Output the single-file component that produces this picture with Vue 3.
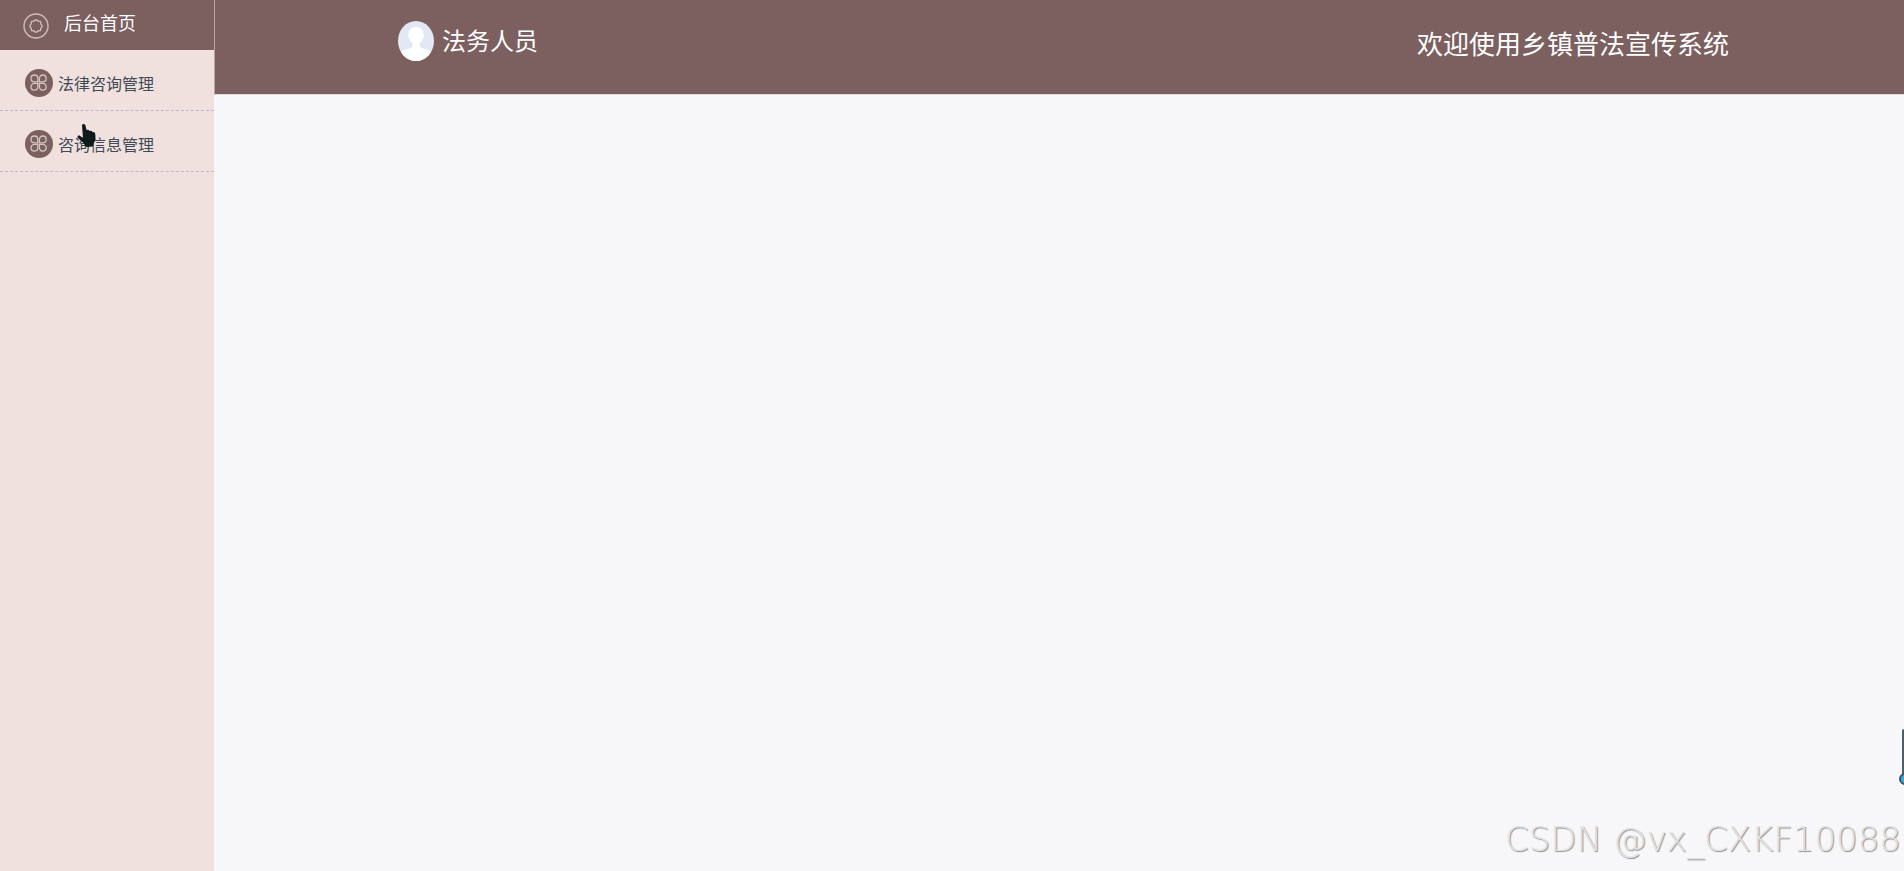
<template>
  <div class="admin-layout">
    <aside class="sidebar">
      <a href="#" class="sidebar-home">
        <svg class="home-icon" viewBox="0 0 26 26" aria-hidden="true">
          <circle cx="13" cy="13" r="12" />
          <path
            d="M11 8.2 Q13 5.4 15 8.2 Q18.4 7.6 17.8 11 Q20.6 13 17.8 15 Q18.4 18.4 15 17.8 Q13 20.6 11 17.8 Q7.6 18.4 8.2 15 Q5.4 13 8.2 11 Q7.6 7.6 11 8.2 Z"
          />
        </svg>
        <span>后台首页</span>
      </a>
      <nav class="menu">
        <a v-for="item in menus" :key="item" href="#" class="menu-item">
          <svg class="menu-icon" viewBox="0 0 28 28" aria-hidden="true">
            <circle class="disc" cx="14" cy="14" r="14" />
            <path d="M12.8 12.8 H9.4 A3.4 3.4 0 1 1 12.8 9.4 Z" />
            <path d="M14.4 12.8 V9.4 A3.4 3.4 0 1 1 17.8 12.8 Z" />
            <path d="M12.8 14.4 V17.8 A3.4 3.4 0 1 1 9.4 14.4 Z" />
            <path d="M14.4 14.4 H17.8 A3.4 3.4 0 1 1 14.4 17.8 Z" />
          </svg>
          <span>{{ item }}</span>
        </a>
      </nav>
    </aside>

    <div class="main">
      <header class="header">
        <div class="user">
          <svg class="avatar" viewBox="0 0 36 40" aria-hidden="true">
            <defs>
              <clipPath id="avatar-clip">
                <ellipse cx="18" cy="20" rx="18" ry="20" />
              </clipPath>
            </defs>
            <g clip-path="url(#avatar-clip)">
              <rect width="36" height="40" fill="#e1e8f3" />
              <path
                d="M18 6 C23 5.6 26 9 25.6 13.5 C26.4 14.6 25.8 16.8 24.7 17.4 C24 20 22.8 21.4 21.8 22.5 V25.5 C23 28 30 27.5 33 31 V40 H3 V31 C6 27.5 13.5 28 14.5 25.5 V22.5 C13 21.3 12 19.6 11.5 17.4 C10.2 16.8 9.8 14.6 10.5 13.5 C10 9 13 6 18 6 Z"
                fill="#ffffff"
              />
            </g>
          </svg>
          <span>{{ role }}</span>
        </div>
        <h1 class="title">欢迎使用乡镇普法宣传系统</h1>
      </header>
      <main class="content"></main>
    </div>

    <svg class="pointer" viewBox="0 0 20 26" aria-hidden="true">
      <path
        d="M5 2 Q7 0 8.5 2.5 L9.5 7 Q11.5 6 12.5 8 Q14.5 7 15.5 9 Q18 8.5 18.3 11 L18.5 17 L16.5 20.5 L16 23.5 L9 24 L6.5 20 L1 15 Q-0.5 12 2.5 12.5 L6 15 Z"
      />
    </svg>

    <div class="widget" aria-hidden="true">
      <span class="widget-bar"></span>
      <span class="widget-dot"></span>
    </div>

    <div class="watermark">CSDN @vx_CXKF10088</div>
  </div>
</template>

<script setup>
import { ref } from 'vue'

const role = ref('法务人员')
const menus = ref(['法律咨询管理', '咨询信息管理'])
</script>

<style>
body {
  margin: 0;
  background-color: #f7f7fa;
}
</style>

<style scoped>
.admin-layout {
  position: relative;
  display: flex;
  min-height: 100vh;
  overflow: hidden;
  font-family: 'Noto Sans CJK SC', 'Noto Sans', sans-serif;
}

a {
  text-decoration: none;
}

.sidebar {
  flex: 0 0 214px;
  background-color: #f0e1de;
}

.sidebar-home {
  display: flex;
  align-items: flex-start;
  gap: 15px;
  height: 50px;
  padding: 0 23px;
  box-sizing: border-box;
  background-color: #7c5f5f;
  color: #fff;
  font-size: 18px;
  line-height: 44px;
}

.home-icon {
  width: 26px;
  height: 26px;
  margin-top: 13px;
  fill: none;
  stroke: #cfbfbe;
  stroke-width: 1.4;
}

.menu-item {
  display: flex;
  align-items: center;
  gap: 5px;
  height: 61px;
  padding: 6px 25px 0;
  box-sizing: border-box;
  color: #3f4a56;
  font-size: 16px;
  line-height: 24px;
  border-bottom: 1px dashed #bdb4dc;
}

.menu-icon {
  width: 28px;
  height: 28px;
  fill: none;
  stroke: #d3c4c2;
  stroke-width: 1.3;
}

.menu-icon .disc {
  fill: #7c5f5f;
  stroke: none;
}

.main {
  flex: 1;
  min-width: 0;
}

.header {
  display: flex;
  align-items: flex-start;
  justify-content: space-between;
  height: 95px;
  padding: 20px 175px 0 183px;
  box-sizing: border-box;
  background-color: #7c5f5f;
  border-left: 1px solid #b5a6a7;
  border-bottom: 1px solid #e6d9da;
  color: #fff;
}

.user {
  display: flex;
  align-items: flex-start;
  gap: 8px;
  font-size: 24px;
  line-height: 40px;
}

.avatar {
  width: 36px;
  height: 40px;
  margin-top: 1px;
}

.title {
  margin: 0;
  font-size: 26px;
  font-weight: 400;
  line-height: 46px;
}

.pointer {
  position: absolute;
  top: 123px;
  left: 77px;
  width: 20px;
  height: 26px;
  fill: #0d1a1c;
}

.widget {
  position: absolute;
  right: 0;
  bottom: 86px;
  width: 5px;
  height: 56px;
  overflow: hidden;
}

.widget-bar {
  position: absolute;
  top: 0;
  left: 3px;
  width: 4px;
  height: 48px;
  border-radius: 2px;
  background-color: #4d5f6b;
}

.widget-dot {
  position: absolute;
  bottom: 0;
  left: 0;
  width: 8px;
  height: 8px;
  border: 2px solid #42525e;
  border-radius: 50%;
  background-color: #35a8dc;
}

.watermark {
  position: absolute;
  right: 3px;
  bottom: 8px;
  color: #e2e2e4;
  font-family: 'DejaVu Sans Light', 'DejaVu Sans', sans-serif;
  font-size: 34px;
  font-weight: 200;
  line-height: 48px;
  text-shadow: 1px 1px 1px #8f8f8f;
}
</style>
